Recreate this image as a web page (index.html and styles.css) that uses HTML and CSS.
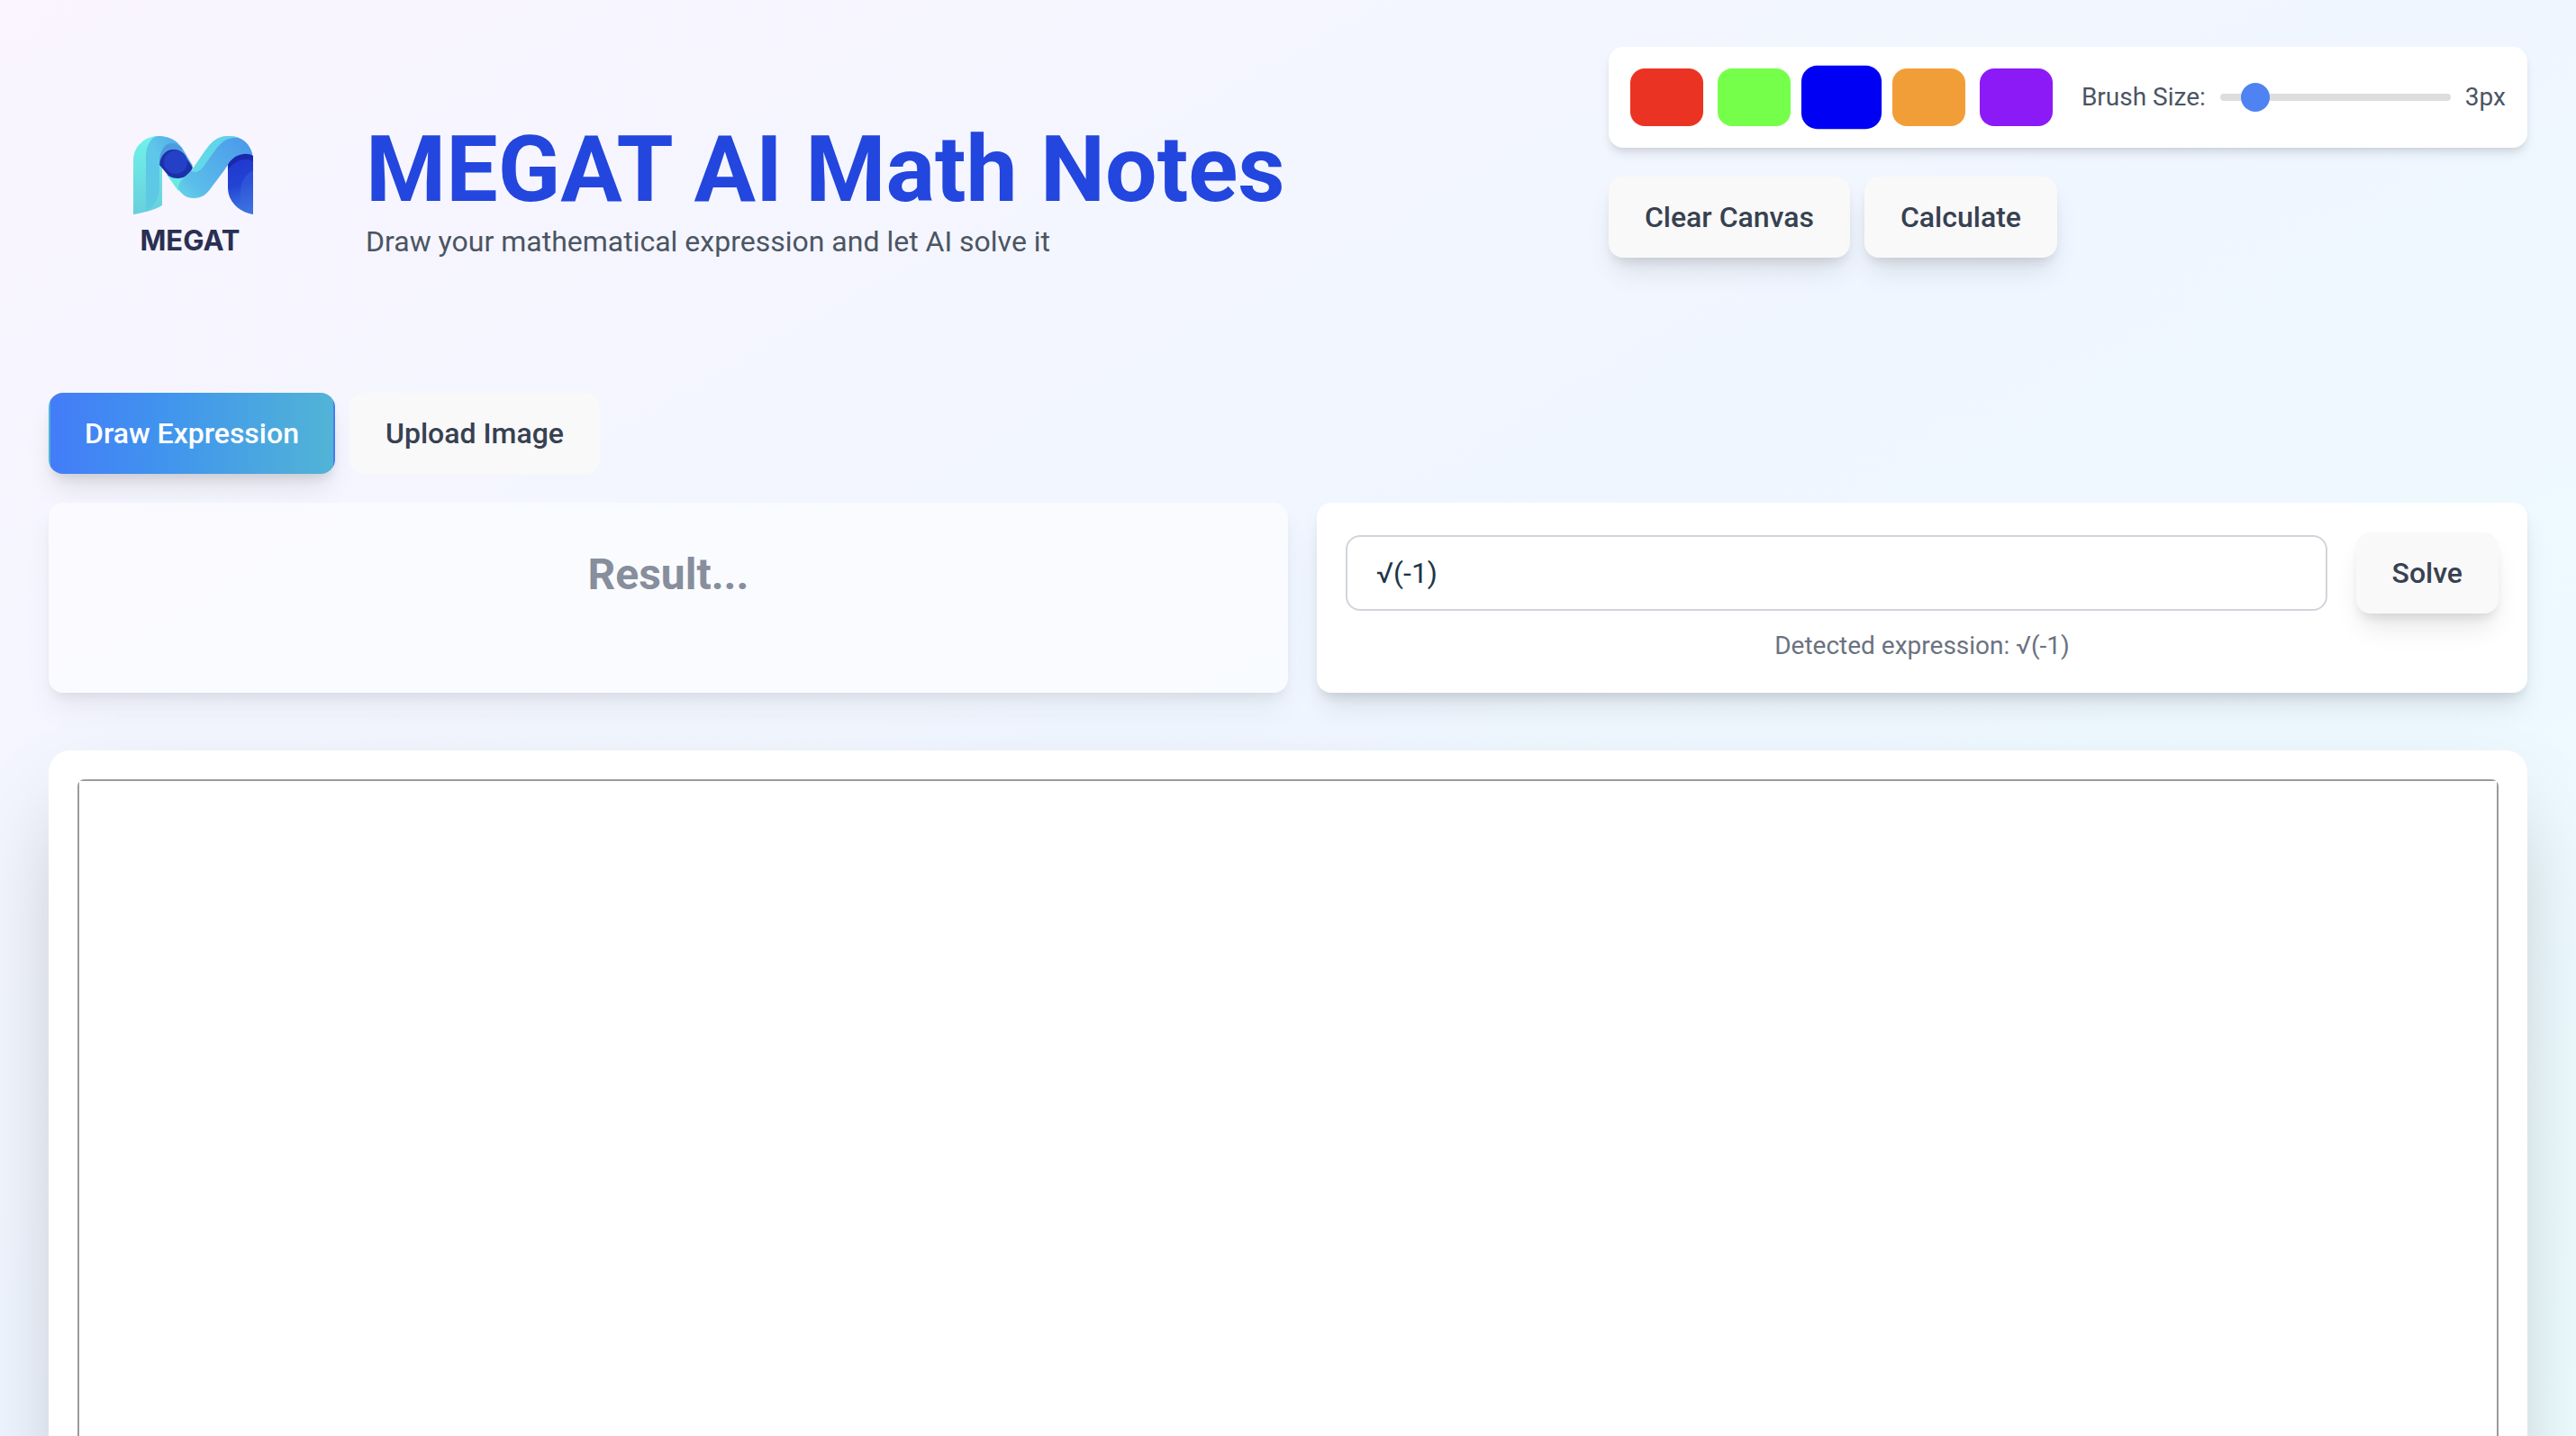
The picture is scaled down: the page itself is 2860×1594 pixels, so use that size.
FILE: index.html
```html
<!DOCTYPE html>
<html lang="en">
<head>
<meta charset="utf-8">
<title>MEGAT AI Math Notes</title>
<meta name="viewport" content="width=device-width, initial-scale=1">
<link rel="stylesheet" href="styles.css">
</head>
<body>
<main class="page">
  <header class="header">
    <div class="brand">
      <svg class="logo" viewBox="0 0 320 320" role="img" aria-label="MEGAT logo">
        <defs>
          <linearGradient id="ribbonLeft" x1="0" y1="0" x2="0" y2="1">
            <stop offset="0" stop-color="#70f2ea"/><stop offset="1" stop-color="#68cfdc"/>
          </linearGradient>
          <linearGradient id="ribbonFold" x1="0" y1="1" x2="1" y2="0">
            <stop offset="0" stop-color="#5ccbe0"/><stop offset="0.5" stop-color="#5fc6ea"/><stop offset="1" stop-color="#4a9de8"/>
          </linearGradient>
          <linearGradient id="ribbonMiddle" gradientUnits="userSpaceOnUse" x1="140" y1="190" x2="226" y2="110">
            <stop offset="0" stop-color="#6cece8"/><stop offset="0.35" stop-color="#5bbdea"/><stop offset="1" stop-color="#4b9aea"/>
          </linearGradient>
          <linearGradient id="ribbonRight" gradientUnits="userSpaceOnUse" x1="205" y1="125" x2="222" y2="186">
            <stop offset="0" stop-color="#2038cf"/><stop offset="0.45" stop-color="#2343d4"/><stop offset="1" stop-color="#4080e2"/>
          </linearGradient>
        </defs>
        <path fill="url(#ribbonLeft)" d="M94 186V126C94 111 106 99 122 99H126V176C118 181 106 184 94 186Z"/>
        <path fill="url(#ribbonFold)" d="M108 182V122C108 110 114 99 122 99C134 99 142 104 148 112L160 132L142 148L123 128V158C122 170 116 178 108 182Z"/>
        <path fill="#69eae4" d="M131 142L154 136L144 160Z"/>
        <path fill="#4d9bdf" d="M123 128C123 116 129 107 136 107C142 107 146 110 149 114L140 118Z"/>
        <path fill="#1c30a8" d="M123 131C124 120 131 114 138 114C144 114 148 116 150 119L160 134C157 142 151 146 143 146C139 146 136 145 133 143Z"/>
        <circle cx="141" cy="128" r="13" fill="#2340c6"/>
        <path fill="url(#ribbonMiddle)" d="M161 134L174 115C182 104 188 99 200 99C216 99 227 110 227 126V127C224 118 216 118 210 122C203 125 199 131 195 137L180 157C175 164 170 168 161 168C153 168 148 164 144 158C143 149 153 144 161 134Z"/>
        <path fill="#68eee8" d="M171 119C181 104 188 99 200 99C204 99 208 100 211 101C196 100 190 108 184 116L171 134C167 139 163 140 158 138Z" opacity=".65"/>
        <path fill="url(#ribbonRight)" d="M227 126V186C211 183 199 172 199 156V131C205 122 220 119 227 126Z"/>
        <path fill="#1b28ae" d="M199 131C205 119 220 116 227 121V127C220 122 206 125 199 137Z"/>
        <path fill="#3b69dc" opacity=".45" d="M213 179V162C213 150 218 142 227 137V186C221 185 217 183 213 179Z"/>
        <text class="logo-word" x="157" y="226" text-anchor="middle">MEGAT</text>
      </svg>
      <div>
        <h1 class="title">MEGAT AI Math Notes</h1>
        <p class="subtitle">Draw your mathematical expression and let AI solve it</p>
      </div>
    </div>
    <div class="tools">
      <div class="toolbar">
        <div class="swatches">
          <button type="button" class="swatch swatch-red" aria-label="Red"></button>
          <button type="button" class="swatch swatch-green" aria-label="Green"></button>
          <button type="button" class="swatch swatch-blue is-selected" aria-label="Blue"></button>
          <button type="button" class="swatch swatch-orange" aria-label="Orange"></button>
          <button type="button" class="swatch swatch-purple" aria-label="Purple"></button>
        </div>
        <div class="brush">
          <label for="brush-size">Brush Size:</label>
          <input class="slider" id="brush-size" type="range" min="1" max="20" value="3">
          <output for="brush-size">3px</output>
        </div>
      </div>
      <div class="actions">
        <button type="button" class="btn btn-raised">Clear Canvas</button>
        <button type="button" class="btn btn-raised">Calculate</button>
      </div>
    </div>
  </header>

  <nav class="actions tabs" aria-label="Input mode">
    <button type="button" class="btn btn-raised btn-active">Draw Expression</button>
    <button type="button" class="btn">Upload Image</button>
  </nav>

  <div class="panels">
    <section class="panel result">
      <h2 class="result-text">Result...</h2>
    </section>
    <section class="panel solver">
      <form class="solve-row">
        <input class="expression" type="text" value="√(-1)" aria-label="Expression">
        <button type="button" class="btn btn-raised">Solve</button>
      </form>
      <p class="detected">Detected expression: √(-1)</p>
    </section>
  </div>

  <section class="board">
    <div class="board-frame">
      <canvas class="board-canvas" aria-label="Drawing canvas"></canvas>
    </div>
  </section>
</main>
</body>
</html>
```
FILE: styles.css
```css
* {
  box-sizing: border-box;
}

body {
  margin: 0;
  height: 100vh;
  overflow: hidden;
  font-family: Roboto, "Liberation Sans", sans-serif;
  font-size: 32px;
  line-height: 48px;
  color: #213547;
  background: linear-gradient(to bottom right, #faf5ff, #eff6ff 50%, #ecfeff 115%);
}

h1, h2, p {
  margin: 0;
}

button, input {
  font: inherit;
}

.page {
  padding: 52px 54px;
}

.header {
  display: flex;
  justify-content: space-between;
  align-items: flex-start;
  margin-bottom: 64px;
}

.brand {
  display: flex;
  align-items: center;
  gap: 32px;
}

.logo {
  width: 320px;
  height: 320px;
}

.logo-word {
  font: 700 31px Inter, sans-serif;
  fill: #293052;
}

.title {
  font-size: 102px;
  font-weight: 700;
  line-height: 112px;
  color: #2346de;
}

.subtitle {
  color: #4b5563;
}

.tools {
  display: flex;
  flex-direction: column;
  gap: 32px;
}

.toolbar {
  display: flex;
  align-items: center;
  gap: 32px;
  padding: 24px;
  border-radius: 16px;
  background: #fff;
  box-shadow: 0 8px 12px -2px rgba(0, 0, 0, .1), 0 4px 8px -4px rgba(0, 0, 0, .1);
}

.swatches, .actions {
  display: flex;
  gap: 16px;
}

.swatch {
  width: 81px;
  height: 64px;
  padding: 0;
  border: 0;
  border-radius: 16px;
}

.swatch.is-selected {
  transform: scale(1.1);
}

.swatch-red { background: #eb3323; }
.swatch-green { background: #75ff4a; }
.swatch-blue { background: #0000f5; }
.swatch-orange { background: #f19e38; }
.swatch-purple { background: #8c1af6; }

.brush {
  display: flex;
  align-items: center;
  gap: 16px;
  font-size: 28px;
  line-height: 40px;
  color: #4b5563;
}

.slider {
  appearance: none;
  width: 256px;
  height: 8px;
  margin: 0;
  border-radius: 4px;
  background: #ddd;
}

.slider::-webkit-slider-thumb {
  appearance: none;
  width: 32px;
  height: 32px;
  border-radius: 50%;
  background: #4f83f1;
}

.btn {
  height: 90px;
  padding: 0 38px;
  border: 2px solid transparent;
  border-radius: 16px;
  font-weight: 500;
  color: #374151;
  background-color: #f9f9f9;
}

.btn-raised {
  box-shadow: 0 20px 30px -6px rgba(0, 0, 0, .1), 0 8px 12px -4px rgba(0, 0, 0, .1);
}

.btn-active {
  color: #fff;
  background-image: linear-gradient(to right, #437cf8, #4094ee 40%, #52b4d6);
}

.tabs {
  margin-bottom: 32px;
}

.panels {
  display: grid;
  grid-template-columns: 43fr 42fr;
  gap: 32px;
  margin-bottom: 64px;
}

.panel {
  padding: 32px;
  border-radius: 16px;
  background: #fff;
  box-shadow: 0 20px 30px -6px rgba(0, 0, 0, .1), 0 8px 12px -4px rgba(0, 0, 0, .1);
}

.result {
  padding-top: 48px;
  opacity: .6;
  text-align: center;
}

.result-text {
  font-size: 48px;
  font-weight: 700;
  line-height: 64px;
  color: #414a5b;
}

.solve-row {
  display: flex;
  align-items: center;
  gap: 32px;
  min-height: 91px;
  margin-bottom: 16px;
}

.expression {
  flex: 1;
  min-width: 0;
  height: 84px;
  padding: 0 32px;
  border: 2px solid #d1d5db;
  border-radius: 16px;
  color: #213547;
  background: #fff;
}

.detected {
  font-size: 28px;
  line-height: 40px;
  text-align: center;
  color: #6b7280;
}

.board {
  padding: 32px;
  border-radius: 24px;
  background: #fff;
  box-shadow: 0 50px 100px -24px rgba(0, 0, 0, .25);
}

.board-frame {
  border: 2px solid #9b9b9b;
  border-radius: 8px;
}

.board-canvas {
  display: block;
  width: 100%;
  height: 100vh;
  background: #fff;
}
```
